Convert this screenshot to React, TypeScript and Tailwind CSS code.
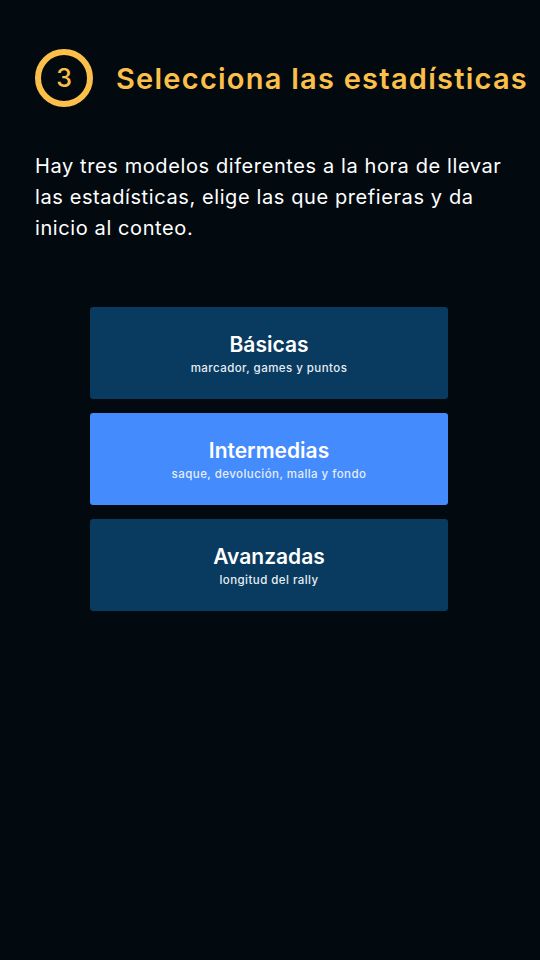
import React from "react";

const cards = [
  { title: "Básicas", sub: "marcador, games y puntos", active: false },
  { title: "Intermedias", sub: "saque, devolución, malla y fondo", active: true },
  { title: "Avanzadas", sub: "longitud del rally", active: false },
];

export default function App() {
  return (
    <div
      className="w-[540px] h-[960px] bg-[#020a10] overflow-hidden"
      style={{ fontFamily: "Inter, 'Noto Sans', sans-serif" }}
    >
      <div className="flex items-center pl-[35px] pt-[49px]">
        <div className="w-[58px] h-[58px] rounded-full border-[6px] border-[#fcc04a] flex items-center justify-center text-[#fcc04a] text-[25px] font-medium leading-none">
          3
        </div>
        <h1 className="ml-[23px] text-[#fcc04a] text-[29px] font-semibold leading-none tracking-[1.25px] whitespace-nowrap">
          Selecciona las estadísticas
        </h1>
      </div>
      <p className="mt-[44px] pl-[35px] pr-[30px] text-white text-[20px] leading-[31px] tracking-[0.6px]">
        Hay tres modelos diferentes a la hora de llevar las estadísticas, elige las que prefieras y da inicio al conteo.
      </p>
      <div className="mt-[63px] ml-[90px] w-[358px] flex flex-col gap-[14px]">
        {cards.map((c) => (
          <div
            key={c.title}
            className={`w-[358px] h-[92px] pt-[3px] rounded-[3px] flex flex-col items-center justify-center text-white ${
              c.active ? "bg-[#448bfd]" : "bg-[#093a5f]"
            }`}
          >
            <div className="text-[21px] font-semibold leading-[24px]">{c.title}</div>
            <div className="mt-[3px] text-[11.5px] font-medium leading-[16px] tracking-[0.45px] text-[#e6eef6]">
              {c.sub}
            </div>
          </div>
        ))}
      </div>
    </div>
  );
}
